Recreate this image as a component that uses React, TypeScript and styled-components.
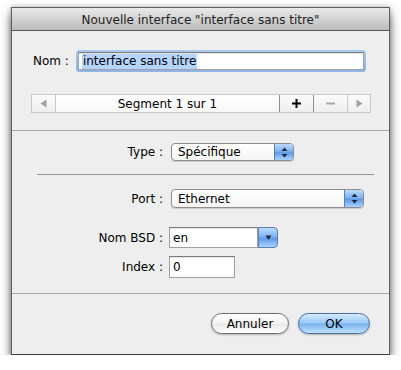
import React from 'react';
import styled, { createGlobalStyle } from 'styled-components';

const Global = createGlobalStyle`
  html, body { margin: 0; padding: 0; background: #ffffff; }
  body { font-family: "DejaVu Sans", "Liberation Sans", sans-serif; font-size: 12px; color: #000; }
  * { box-sizing: border-box; }
`;

const Window = styled.div`
  margin: 7px 0 0 11px;
  width: 379px;
  height: 348px;
  background: #eeeeee;
  border: 1px solid #5e5e5e;
  border-bottom-color: #3c3c3c;
  box-shadow: 0 7px 10px rgba(0, 0, 0, 0.55), 0 0 5px rgba(0, 0, 0, 0.3);
  display: flex;
  flex-direction: column;
`;

const TitleBar = styled.div`
  height: 23px;
  flex: none;
  background: linear-gradient(#e9e9e9, #bcbcbc);
  border-bottom: 1px solid #5a5a5a;
  display: flex;
  align-items: center;
  justify-content: center;
  color: #222;
  font-size: 12px;
  padding-top: 1px;
`;

const TopSection = styled.div`
  height: 99px;
  flex: none;
  padding: 19px 0 0 0;
  display: flex;
  flex-direction: column;
`;

const NameRow = styled.div`
  display: flex;
  align-items: center;
  height: 22px;
  padding-left: 21px;
  gap: 7px;
`;

const Label = styled.span`
  white-space: nowrap;
`;

const FocusRing = styled.div`
  width: 290px;
  height: 22px;
  padding: 2px;
  border-radius: 3px;
  background: linear-gradient(#a9c9f0, #8db4e6);
`;

const TextBox = styled.div<{ $w?: number }>`
  width: ${p => (p.$w ? `${p.$w}px` : '100%')};
  height: 100%;
  background: #fff;
  border: 1px solid #a0a0a0;
  border-top-color: #7c7c7c;
  box-shadow: inset 0 1px 1px rgba(0, 0, 0, 0.12);
  display: flex;
  align-items: center;
  padding-left: 3px;
`;

const Selected = styled.span`
  background: #b5d5ff;
  padding: 0 1px;
  line-height: 15px;
`;

const SegmentBar = styled.div`
  margin: 22px 0 0 19px;
  width: 340px;
  height: 19px;
  display: flex;
  border: 1px solid #c8c8c8;
  background: linear-gradient(#fbfbfb, #eeeeee);
`;

const Seg = styled.div<{ $w: number; $strong?: boolean; $white?: boolean }>`
  width: ${p => p.$w}px;
  flex: none;
  display: flex;
  align-items: center;
  justify-content: center;
  color: ${p => (p.$strong ? '#000' : '#9c9c9c')};
  border-right: 1px solid ${p => (p.$strong ? '#8f8f8f' : '#c8c8c8')};
  background: ${p => (p.$white ? 'linear-gradient(#ffffff, #f7f7f7)' : 'transparent')};
  &:last-child { border-right: none; }
`;

const MiddleSection = styled.div`
  height: 164px;
  flex: none;
  border-top: 1px solid #a8a8a8;
  border-bottom: 1px solid #a8a8a8;
  display: flex;
  flex-direction: column;
`;

const FormRow = styled.div<{ $mt: number; $h: number }>`
  margin-top: ${p => p.$mt}px;
  height: ${p => p.$h}px;
  display: grid;
  grid-template-columns: 151px 1fr;
  column-gap: 6px;
  align-items: center;
`;

const RowLabel = styled.span`
  text-align: right;
  white-space: nowrap;
`;

const Divider = styled.div<{ $mt: number }>`
  margin: ${p => p.$mt}px 15px 0 25px;
  height: 1px;
  flex: none;
  background: #9a9a9a;
`;

const Popup = styled.div<{ $w: number }>`
  margin-left: 2px;
  width: ${p => p.$w}px;
  height: 100%;
  border: 1px solid #8e8e8e;
  border-radius: 4px;
  background: linear-gradient(#ffffff, #f4f4f4);
  box-shadow: 0 1px 1px rgba(0, 0, 0, 0.15);
  display: flex;
  overflow: hidden;
`;

const PopupText = styled.div`
  flex: 1;
  display: flex;
  align-items: center;
  padding-left: 6px;
`;

const BlueCap = styled.div<{ $w: number }>`
  width: ${p => p.$w}px;
  flex: none;
  border-left: 1px solid #5a7fb8;
  background: linear-gradient(#bcdcff 0%, #7fb3f0 45%, #5f9ae6 55%, #a9d3ff 100%);
  display: flex;
  align-items: center;
  justify-content: center;
`;

const Combo = styled.div`
  width: 109px;
  height: 100%;
  display: flex;
`;

const ComboCap = styled(BlueCap)`
  border: 1px solid #5a7fb8;
  border-radius: 0 4px 4px 0;
`;

const BottomSection = styled.div`
  flex: 1;
  display: flex;
  justify-content: flex-end;
  align-items: flex-start;
  padding: 19px 19px 0 0;
  gap: 9px;
`;

const PillButton = styled.div<{ $w: number; $primary?: boolean }>`
  width: ${p => p.$w}px;
  height: 21px;
  border-radius: 11px;
  border: 1px solid ${p => (p.$primary ? '#4a6ea8' : '#6e6e6e')};
  background: ${p =>
    p.$primary
      ? 'linear-gradient(#d6ebff 0%, #9ccaf7 45%, #7cb5f0 55%, #bfe3ff 100%)'
      : 'linear-gradient(#ffffff 0%, #f5f5f5 45%, #e9e9e9 55%, #ffffff 100%)'};
  box-shadow: 0 1px 2px rgba(0, 0, 0, 0.25);
  display: flex;
  align-items: center;
  justify-content: center;
  font-size: 12px;
`;

const UpDown = () => (
  <svg width="7" height="11" viewBox="0 0 7 11">
    <path d="M3.5 0.5 L6.5 4 L0.5 4 Z" fill="#1d2a44" />
    <path d="M3.5 10.5 L6.5 7 L0.5 7 Z" fill="#1d2a44" />
  </svg>
);

const Down = () => (
  <svg width="7" height="6" viewBox="0 0 7 6">
    <path d="M0.5 0.5 L6.5 0.5 L3.5 5 Z" fill="#1d2a44" />
  </svg>
);

const Tri = ({ dir }: { dir: 'l' | 'r' }) => (
  <svg width="7" height="9" viewBox="0 0 7 9">
    <path d={dir === 'l' ? 'M6.5 0.5 L6.5 8.5 L0.5 4.5 Z' : 'M0.5 0.5 L0.5 8.5 L6.5 4.5 Z'} fill="#a0a0a0" />
  </svg>
);

const Plus = () => (
  <svg width="9" height="9" viewBox="0 0 9 9">
    <path d="M4.5 0 V9 M0 4.5 H9" stroke="#000" strokeWidth="2" />
  </svg>
);

const Minus = () => (
  <svg width="9" height="9" viewBox="0 0 9 9">
    <path d="M0 4.5 H9" stroke="#a8a8a8" strokeWidth="2" />
  </svg>
);

export default function App() {
  return (
    <>
      <Global />
      <Window>
        <TitleBar>Nouvelle interface "interface sans titre"</TitleBar>
        <TopSection>
          <NameRow>
            <Label>Nom :</Label>
            <FocusRing>
              <TextBox>
                <Selected>interface sans titre</Selected>
              </TextBox>
            </FocusRing>
          </NameRow>
          <SegmentBar>
            <Seg $w={24}><Tri dir="l" /></Seg>
            <Seg $w={224} $strong $white>Segment 1 sur 1</Seg>
            <Seg $w={34} $strong><Plus /></Seg>
            <Seg $w={34}><Minus /></Seg>
            <Seg $w={22}><Tri dir="r" /></Seg>
          </SegmentBar>
        </TopSection>
        <MiddleSection>
          <FormRow $mt={12} $h={18}>
            <RowLabel>Type :</RowLabel>
            <Popup $w={123}>
              <PopupText>Spécifique</PopupText>
              <BlueCap $w={19}><UpDown /></BlueCap>
            </Popup>
          </FormRow>
          <Divider $mt={13} />
          <FormRow $mt={14} $h={19}>
            <RowLabel>Port :</RowLabel>
            <Popup $w={193}>
              <PopupText>Ethernet</PopupText>
              <BlueCap $w={19}><UpDown /></BlueCap>
            </Popup>
          </FormRow>
          <FormRow $mt={19} $h={21}>
            <RowLabel>Nom BSD :</RowLabel>
            <Combo>
              <TextBox>en</TextBox>
              <ComboCap $w={20}><Down /></ComboCap>
            </Combo>
          </FormRow>
          <FormRow $mt={8} $h={22}>
            <RowLabel>Index :</RowLabel>
            <TextBox $w={66}>0</TextBox>
          </FormRow>
        </MiddleSection>
        <BottomSection>
          <PillButton $w={78}>Annuler</PillButton>
          <PillButton $w={72} $primary>OK</PillButton>
        </BottomSection>
      </Window>
    </>
  );
}
